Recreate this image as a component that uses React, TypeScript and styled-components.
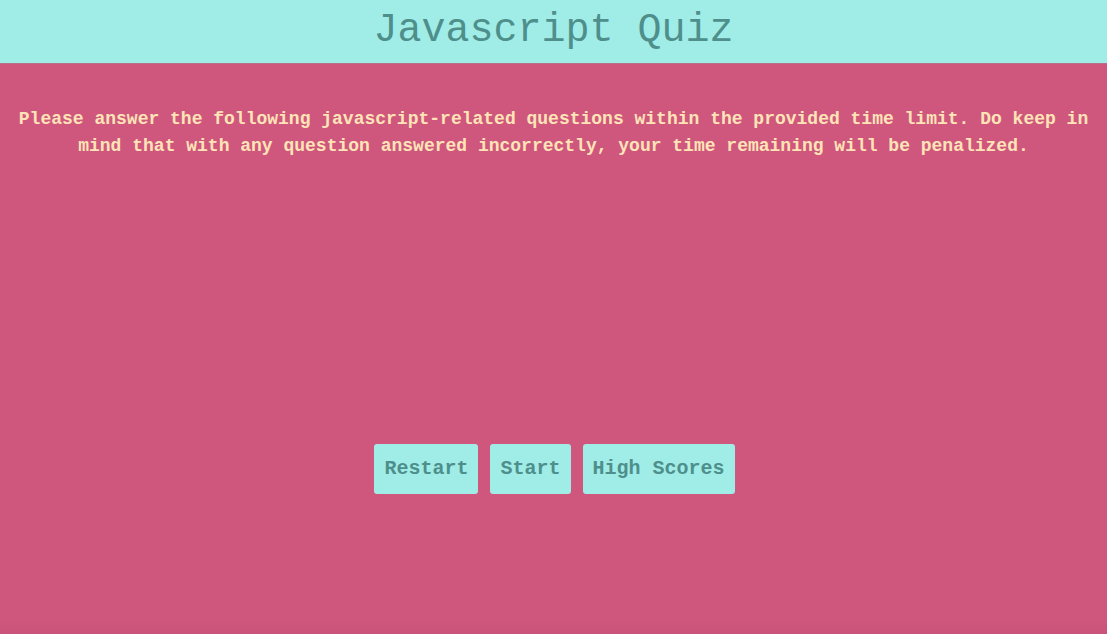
import React from "react";
import styled, { createGlobalStyle } from "styled-components";

const GlobalStyle = createGlobalStyle`
  html, body {
    margin: 0;
    padding: 0;
    height: 100%;
  }
  body {
    background: #cf577e;
    font-family: "Liberation Mono", "Courier New", monospace;
  }
  #root {
    min-height: 100%;
  }
`;

const Page = styled.div`
  display: flex;
  flex-direction: column;
  height: 634px;
  background: linear-gradient(to bottom, #cf577e 0, #cf577e 620px, #c9537a 634px);
`;

const Header = styled.header`
  height: 63px;
  display: flex;
  align-items: center;
  justify-content: center;
  background: #a0ece7;
  border-bottom: 1px solid #b6708c;
`;

const Title = styled.h1`
  margin: 0;
  font-family: "Liberation Mono", "Courier New", monospace;
  font-weight: normal;
  font-size: 40px;
  color: #4e8f8b;
  line-height: 1;
  padding-bottom: 2px;
`;

const Intro = styled.p`
  margin: 42px 0 0;
  padding: 0 8px;
  text-align: center;
  font-weight: bold;
  font-size: 18px;
  line-height: 27px;
  color: #ffe4b7;
`;

const ButtonRow = styled.div`
  display: flex;
  justify-content: center;
  gap: 12px;
  margin-top: 284px;
  padding-left: 2px;
`;

const Button = styled.button`
  font-family: "Liberation Mono", "Courier New", monospace;
  font-weight: bold;
  font-size: 20px;
  line-height: 23px;
  color: #4e8f8b;
  background: #a0ece7;
  border: none;
  border-radius: 3px;
  padding: 13px 10px 14px;
  cursor: pointer;
`;

export default function App() {
  return (
    <>
      <GlobalStyle />
      <Page>
        <Header>
          <Title>Javascript Quiz</Title>
        </Header>
        <Intro>
          Please answer the following javascript-related questions within the provided time
          limit. Do keep in mind that with any question answered incorrectly, your time
          remaining will be penalized.
        </Intro>
        <ButtonRow>
          <Button>Restart</Button>
          <Button>Start</Button>
          <Button>High Scores</Button>
        </ButtonRow>
      </Page>
    </>
  );
}
